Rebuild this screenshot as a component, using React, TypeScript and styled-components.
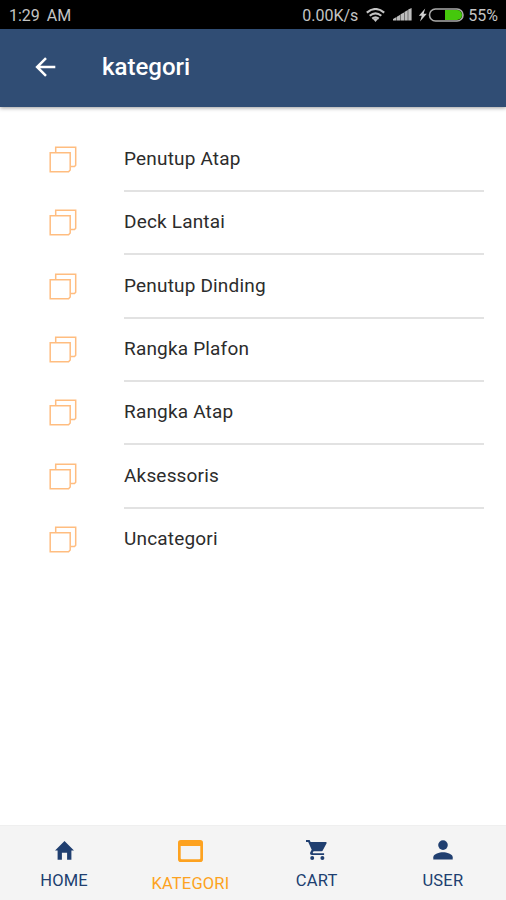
import React from 'react';
import styled, { createGlobalStyle } from 'styled-components';

const GlobalStyle = createGlobalStyle`
  * { box-sizing: border-box; }
  body { margin: 0; background: #fff; font-family: Roboto, sans-serif; }
  svg { display: block; flex: none; }
`;

const Screen = styled.div`
  width: 506px;
  height: 900px;
  display: flex;
  flex-direction: column;
  overflow: hidden;
  background: #fff;
`;

const StatusBar = styled.div`
  height: 28.5px;
  flex: none;
  display: flex;
  align-items: center;
  padding: 3px 8px 0 9px;
  background: #000;
  color: #c4c4c4;
  font-size: 16px;
  line-height: 20px;
`;

const Clock = styled.span`
  flex: 1;
  word-spacing: 3px;
`;

const Speed = styled.span`
  margin-right: 8px;
`;

const StatusIcons = styled.div`
  display: flex;
  align-items: center;
  margin: 0 4px 2px 0;
`;

const SignalSlot = styled.span`
  margin: 0 6px 0 8px;
`;

const Header = styled.header`
  height: 78px;
  flex: none;
  display: flex;
  align-items: center;
  padding: 0 0 2px 35px;
  background: #304d74;
  color: #fff;
  box-shadow: 0 1px 4px rgba(0, 0, 0, 0.4);
`;

const Title = styled.h1`
  margin: 1px 0 0 46px;
  font-size: 24px;
  line-height: 30px;
  font-weight: 500;
`;

const List = styled.ul`
  flex: 1;
  margin: 0;
  padding: 22.1px 22px 0 49px;
  list-style: none;
`;

const Row = styled.li`
  height: 63.35px;
  display: flex;
  align-items: stretch;
  svg { margin: 17.4px 47px 0 0; }
  &:last-child > span { border-bottom: 0; }
`;

const RowLabel = styled.span`
  flex: 1;
  padding-top: 18.4px;
  border-bottom: 2px solid #e2e2e2;
  color: #2c2c2c;
  font-size: 19px;
  line-height: 24px;
  letter-spacing: 0.18px;
`;

const TabBar = styled.nav`
  height: 75px;
  flex: none;
  display: grid;
  grid-template-columns: repeat(4, 1fr);
  padding-left: 1px;
  background: #f4f4f4;
  border-top: 1px solid #efefef;
`;

const Tab = styled.div<{ $active?: boolean }>`
  display: flex;
  flex-direction: column;
  align-items: center;
  gap: ${p => (p.$active ? 12 : 11)}px;
  padding-top: 14px;
  color: ${p => (p.$active ? '#fda220' : '#203f70')};
`;

const TabLabel = styled.span`
  font-size: 16.5px;
  line-height: 20px;
  letter-spacing: 0.18px;
`;

const BackArrow = () => (
  <svg width="21" height="20" viewBox="0 0 21 20" fill="none" stroke="currentColor" strokeWidth="2.5">
    <path d="M20.3 10H2.5M11 1.1L2.1 10l8.9 8.9" />
  </svg>
);

const Wifi = () => (
  <svg width="19" height="14" viewBox="0 0 19 14" fill="none" stroke="#c4c4c4" strokeWidth="2.1">
    <path d="M.8 4.6Q9.5-2.6 18.2 4.6M3.7 7.7q5.8-4.7 11.6 0M6.2 10.6q3.3-2.6 6.6 0" />
    <path d="M7 11.1q2.5-1.7 5 0L9.5 13.9z" fill="#c4c4c4" stroke="none" />
  </svg>
);

const Signal = () => (
  <svg width="19" height="13" viewBox="0 0 19 13" fill="#bdbdbd">
    <path d="M0 12.5v-1.4l3.5-2v3.4zM3.9 12.5V8.7l3.3-1.9v5.7zM7.6 12.5V6.3l3.4-1.9v8.1zM11.4 12.5V3.9l3.4-1.9v10.5zM15.2 12.5V1.5L18.6 0v12.5z" />
  </svg>
);

const Battery = () => (
  <svg width="46" height="14" viewBox="0 0 46 14">
    <path d="M7.2 .5L.8 7.7h3L2 13.5l6.8-7.7H5.6z" fill="#d0d0d0" />
    <rect x="11.5" y="1" width="33.5" height="12" rx="6" fill="#000" stroke="#aaa" strokeWidth="1.6" />
    <path d="M27 2h12a5 5 0 0 1 0 10H27z" fill="#45c80c" />
  </svg>
);

const Copy = () => (
  <svg width="28" height="28" viewBox="0 0 28 28" fill="none" stroke="#ffbd80" strokeWidth="1.5">
    <path d="M6.7 6.2V1.3h20v18l-1.2 1.2h-3.8" />
    <path d="M1.2 6.7h20v17.2l-1.6 1.8H1.2z" />
  </svg>
);

const Home = () => (
  <svg width="19" height="20" viewBox="0 0 19 20" fill="currentColor">
    <path d="M6.9 19.8v-7h5.2v7h4.3v-9.2H19L9.5 1 0 10.6h2.6v9.2z" />
  </svg>
);

const Browser = () => (
  <svg width="25" height="22" viewBox="0 0 25 22" fill="currentColor">
    <path fillRule="evenodd" d="M2.8 0h19.4Q25 0 25 2.8v16.4q0 2.8-2.8 2.8H2.8Q0 22 0 19.2V2.8Q0 0 2.8 0zM2.7 6.1v12.2q0 1 1 1h17.6q1 0 1-1V6.1z" />
  </svg>
);

const Cart = () => (
  <svg width="21" height="20" viewBox="0 0 21 20" fill="currentColor">
    <path d="M0 0h3.6l1 2H20q1 .2.6 1.3l-3.5 6.4q-.5 1.5-1.6 1.5H7.6l-.8 1.4q-.1.6.3.6h11v1.8H6q-2.6-.4-1.7-2.8l1.4-2.5L2.2 2H0z" />
    <circle cx="6.2" cy="18" r="2" />
    <circle cx="16.4" cy="18" r="2" />
  </svg>
);

const Person = () => (
  <svg width="20" height="20" viewBox="0 0 20 20" fill="currentColor">
    <circle cx="10" cy="5.1" r="4.8" />
    <path d="M.3 19.5v-2.2c0-3.3 6.3-5 9.7-5s9.7 1.7 9.7 5v2.2z" />
  </svg>
);

const categories = [
  'Penutup Atap',
  'Deck Lantai',
  'Penutup Dinding',
  'Rangka Plafon',
  'Rangka Atap',
  'Aksessoris',
  'Uncategori',
];

const tabs = [
  { label: 'HOME', Icon: Home },
  { label: 'KATEGORI', Icon: Browser, active: true },
  { label: 'CART', Icon: Cart },
  { label: 'USER', Icon: Person },
];

export default function App() {
  return (
    <Screen>
      <GlobalStyle />
      <StatusBar>
        <Clock>1:29 AM</Clock>
        <Speed>0.00K/s</Speed>
        <StatusIcons>
          <Wifi />
          <SignalSlot>
            <Signal />
          </SignalSlot>
          <Battery />
        </StatusIcons>
        <span>55%</span>
      </StatusBar>
      <Header>
        <BackArrow />
        <Title>kategori</Title>
      </Header>
      <List>
        {categories.map(name => (
          <Row key={name}>
            <Copy />
            <RowLabel>{name}</RowLabel>
          </Row>
        ))}
      </List>
      <TabBar>
        {tabs.map(({ label, Icon, active }) => (
          <Tab key={label} $active={active}>
            <Icon />
            <TabLabel>{label}</TabLabel>
          </Tab>
        ))}
      </TabBar>
    </Screen>
  );
}
